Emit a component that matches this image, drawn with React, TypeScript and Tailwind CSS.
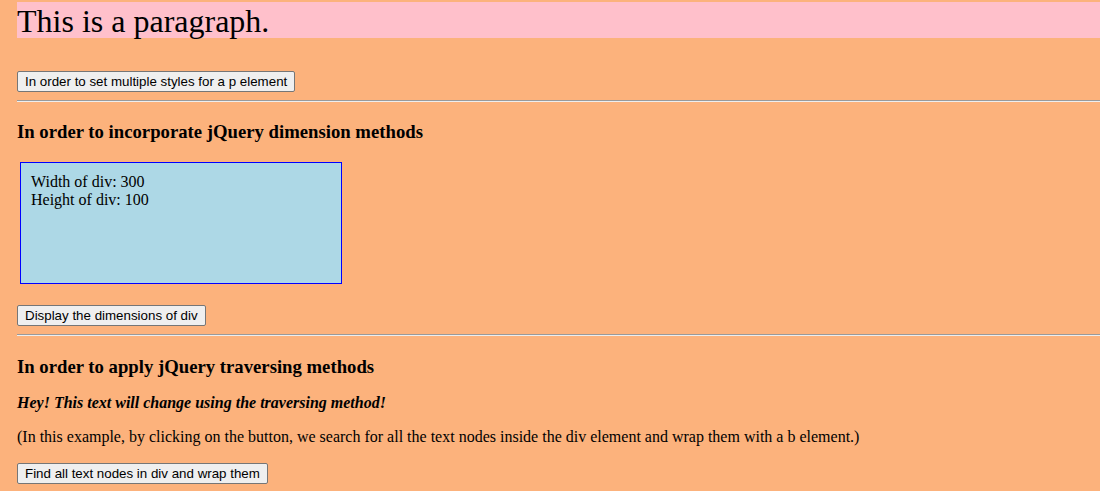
export default function App() {
  const btn =
    "block h-[21px] px-[7px] bg-[#efefef] border border-[#767676] rounded-[2px] text-[13.33px] leading-[17px] text-black font-['Liberation_Sans',Arial,sans-serif]";

  return (
    <div className="min-h-screen bg-[#fcb27c] pl-[17px] pt-[2px] pb-[8px] font-['Liberation_Serif','Times_New_Roman',serif] text-black">
      <p className="bg-[#ffc0cb] text-[32px] leading-[36px] pt-[1px] h-[36px]">This is a paragraph.</p>

      <button className={`${btn} mt-[33px]`}>In order to set multiple styles for a p element</button>

      <hr className="mt-[8px] border-0 border-t border-t-[#9a9a9a] border-b border-b-[#eeeeee]" />

      <h3 className="mt-[19px] text-[18.72px] leading-[22px] font-bold">
        In order to incorporate jQuery dimension methods
      </h3>

      <div className="mt-[19px] ml-[3px] w-[322px] h-[122px] border border-[#0000ff] bg-[#add8e6] p-[10px] text-[16px] leading-[18px]">
        Width of div: 300
        <br />
        Height of div: 100
      </div>

      <button className={`${btn} mt-[21px]`}>Display the dimensions of div</button>

      <hr className="mt-[8px] border-0 border-t border-t-[#9a9a9a] border-b border-b-[#eeeeee]" />

      <h3 className="mt-[20px] text-[18.72px] leading-[22px] font-bold">
        In order to apply jQuery traversing methods
      </h3>

      <p className="mt-[16px] text-[16px] leading-[18px]">
        <em className="font-bold">Hey! This text will change using the traversing method!</em>
      </p>

      <p className="mt-[16px] text-[16px] leading-[18px]">
        (In this example, by clicking on the button, we search for all the text nodes inside the div element and
        wrap them with a b element.)
      </p>

      <button className={`${btn} mt-[17px]`}>Find all text nodes in div and wrap them</button>
    </div>
  );
}
